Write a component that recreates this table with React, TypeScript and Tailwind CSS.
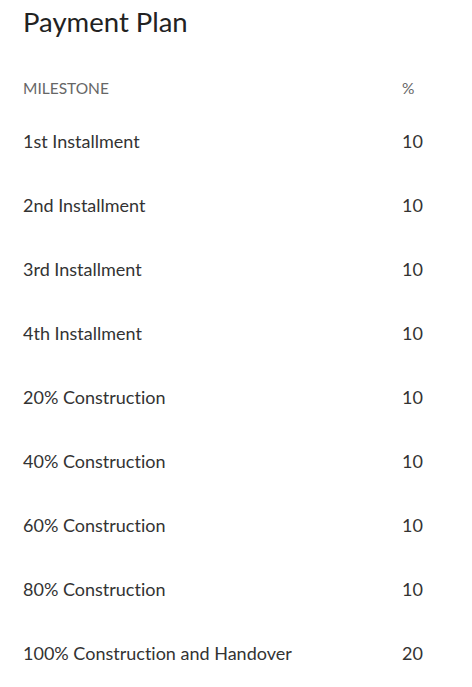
const rows: [string, number][] = [
  ['1st Installment', 10],
  ['2nd Installment', 10],
  ['3rd Installment', 10],
  ['4th Installment', 10],
  ['20% Construction', 10],
  ['40% Construction', 10],
  ['60% Construction', 10],
  ['80% Construction', 10],
  ['100% Construction and Handover', 20],
];

export default function App() {
  return (
    <div className="min-h-screen bg-white pl-[23px] pt-[4px] font-['Lato',sans-serif] [font-variant-ligatures:none]">
      <h2 className="text-[27.5px] leading-[36px] text-[#222]">Payment Plan</h2>
      <div className="mt-[39px] w-[424px]">
        <div className="flex h-[20px] items-center text-[15.5px] text-[#666]">
          <span className="flex-1">MILESTONE</span>
          <span className="w-[45px]">%</span>
        </div>
        {rows.map(([name, pct], i) => (
          <div
            key={i}
            className={`flex items-center text-[18px] text-[#333] ${i === 0 ? 'mt-[22px] h-[40px]' : 'mt-[24px] h-[40px]'}`}
          >
            <span className="flex-1">{name}</span>
            <span className="w-[45px]">{pct}</span>
          </div>
        ))}
      </div>
    </div>
  );
}
